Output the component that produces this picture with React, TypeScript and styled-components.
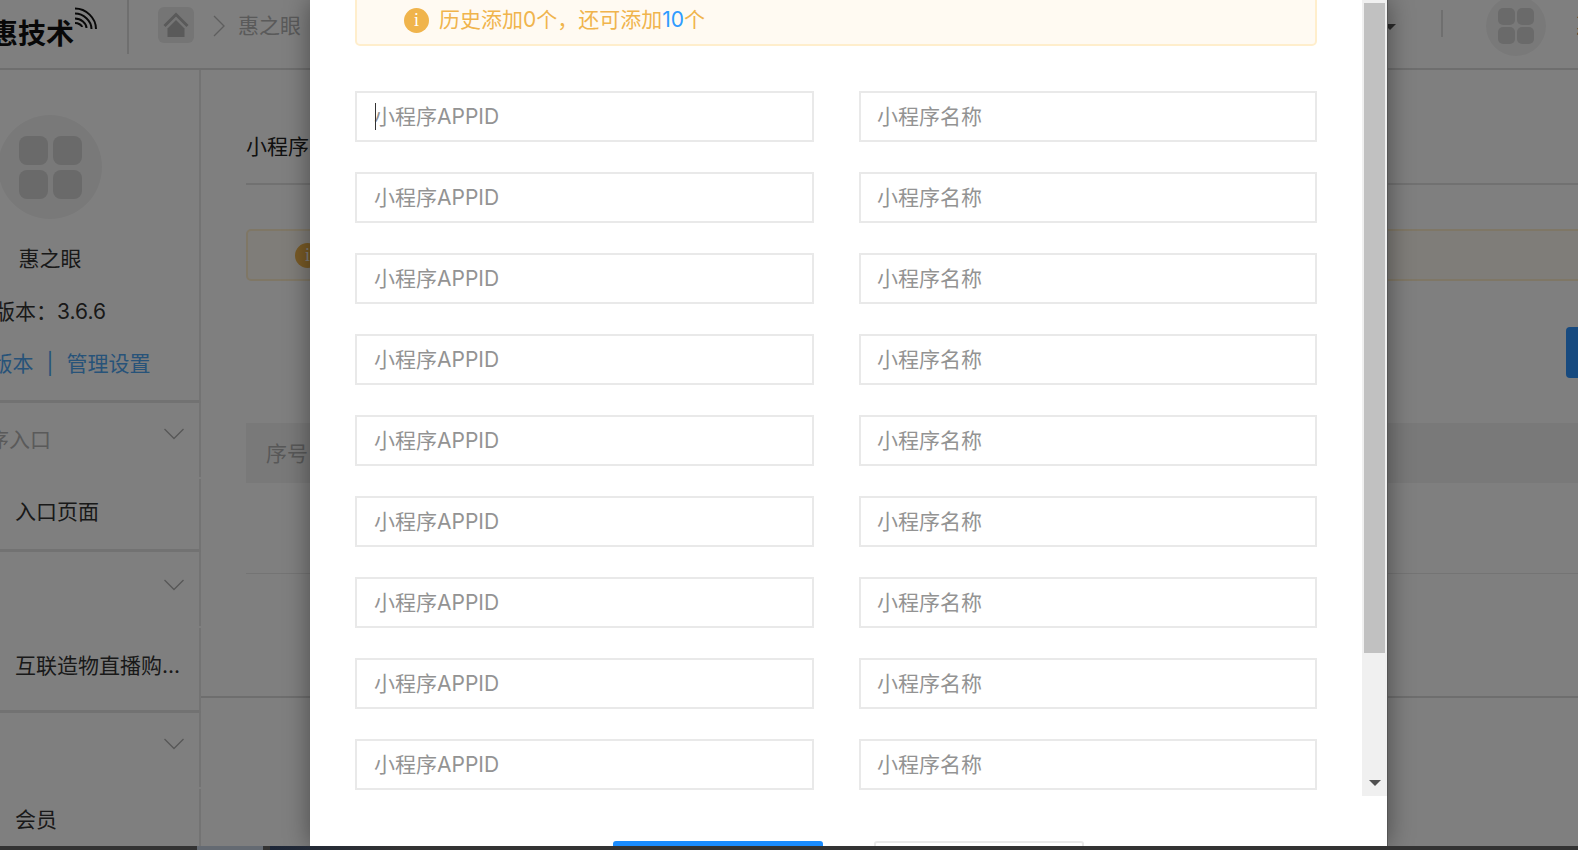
import React from "react";
import styled, { createGlobalStyle } from "styled-components";

const GlobalStyle = createGlobalStyle`
  html, body { margin: 0; padding: 0; overflow: hidden; background: #fff; }
  body { font-family: "Inter", "Noto Sans CJK SC", sans-serif; font-size: 21px; color: #444; }
  * { box-sizing: border-box; }
`;

const Screen = styled.div`
  width: 1578px;
  height: 850px;
  display: flex;
  flex-direction: column;
  overflow: hidden;
`;
const Page = styled.div`
  position: relative;
  height: 846px;
  flex: none;
  overflow: hidden;
  display: flex;
  flex-direction: column;
`;

/* ---------- header ---------- */
const Header = styled.header`
  height: 70px;
  flex: none;
  display: flex;
  align-items: flex-start;
  border-bottom: 2px solid #dcdcdc;
`;
const Logo = styled.div`
  width: 127px;
  height: 68px;
  flex: none;
  display: flex;
  align-items: flex-start;
  justify-content: flex-end;
  padding-right: 52px;
  overflow: hidden;
`;
const LogoText = styled.span`
  font-size: 28px;
  font-weight: 700;
  line-height: 34px;
  margin-top: 17px;
  color: #111;
  white-space: nowrap;
  flex: none;
`;
const LogoWaves = styled.svg`
  width: 24px;
  height: 24px;
  margin-top: 7px;
  margin-right: -23px;
  flex: none;
`;
const HeaderRule = styled.div<{ $top: number; $h: number; $left: number }>`
  width: 2px;
  height: ${(p) => p.$h}px;
  margin-top: ${(p) => p.$top}px;
  margin-left: ${(p) => p.$left}px;
  background: #dedede;
  flex: none;
`;
const HomeTile = styled.div`
  width: 36px;
  height: 36px;
  margin-top: 7px;
  margin-left: 29px;
  border-radius: 6px;
  background: #eaeaea;
  display: flex;
  align-items: center;
  justify-content: center;
  flex: none;
`;
const CrumbArrow = styled.svg`
  width: 12px;
  height: 22px;
  margin-top: 15px;
  margin-left: 19px;
  flex: none;
`;
const Crumb = styled.span`
  margin-left: 13px;
  margin-top: 10px;
  line-height: 32px;
  color: #b4b4b4;
  white-space: nowrap;
`;
const UserCaret = styled.div`
  margin-left: auto;
  margin-top: 24px;
  width: 0;
  height: 0;
  border-left: 6px solid transparent;
  border-right: 6px solid transparent;
  border-top: 6px solid #555;
  flex: none;
`;
const AvatarCircle = styled.div<{ $size: number; $top: number; $left: number }>`
  width: ${(p) => p.$size}px;
  height: ${(p) => p.$size}px;
  margin-top: ${(p) => p.$top}px;
  margin-left: ${(p) => p.$left}px;
  border-radius: 50%;
  background: #f3f3f3;
  display: flex;
  align-items: center;
  justify-content: center;
  flex: none;
`;
const TileGrid = styled.div<{ $tile: number; $gap: number }>`
  display: grid;
  grid-template-columns: ${(p) => p.$tile}px ${(p) => p.$tile}px;
  grid-auto-rows: ${(p) => p.$tile}px;
  gap: ${(p) => p.$gap}px;
`;
const Tile = styled.i<{ $radius: number }>`
  display: block;
  background: #d4d4d4;
  border-radius: ${(p) => p.$radius}px;
`;
const UserName = styled.span`
  margin-left: 30px;
  margin-right: -19px;
  margin-top: 10px;
  line-height: 32px;
  color: #444;
  white-space: nowrap;
  flex: none;
`;

/* ---------- body ---------- */
const Columns = styled.div`
  flex: 1;
  display: flex;
  min-height: 0;
`;
const Sidebar = styled.aside`
  width: 300px;
  margin-left: -99px;
  flex: none;
  display: flex;
  flex-direction: column;
`;
const Profile = styled.div`
  height: 333px;
  flex: none;
  padding-top: 45px;
  display: flex;
  flex-direction: column;
  align-items: center;
  border-right: 2px solid #e6e6e6;
  border-bottom: 3px solid #e4e4e4;
`;
const ProfileLine = styled.div<{ $top: number }>`
  margin-top: ${(p) => p.$top}px;
  line-height: 30px;
  color: #333;
  white-space: nowrap;
`;
const LinkLine = styled.div`
  margin-top: 22px;
  line-height: 30px;
  color: #4fa6f2;
  white-space: nowrap;
  display: flex;
  gap: 13px;
`;
const NavHead = styled.div<{ $h: number; $gap: number }>`
  height: ${(p) => p.$h}px;
  margin-bottom: ${(p) => p.$gap}px;
  flex: none;
  display: flex;
  align-items: center;
  justify-content: space-between;
  padding: 0 14px 0 99px;
  color: #b4b4b4;
  border-right: 2px solid #e6e6e6;
  white-space: nowrap;
`;
const NavHeadLabel = styled.span`
  margin-left: -54px;
  margin-top: -5px;
`;
const Chevron = styled.svg<{ $lift: number }>`
  width: 22px;
  height: 12px;
  margin-top: ${(p) => -p.$lift}px;
  margin-left: auto;
  flex: none;
`;
const NavItem = styled.div<{ $h: number; $top: number; $divider?: boolean }>`
  height: ${(p) => p.$h}px;
  flex: none;
  padding: ${(p) => p.$top}px 0 0 114px;
  line-height: 30px;
  color: #333;
  white-space: nowrap;
  border-right: 2px solid #e6e6e6;
  ${(p) => (p.$divider ? "border-bottom: 3px solid #e4e4e4;" : "")}
`;

const Main = styled.main`
  flex: 1;
  min-width: 0;
  display: flex;
  flex-direction: column;
  overflow: hidden;
`;
const Content = styled.section`
  height: 628px;
  flex: none;
  padding: 62px 0 0 45px;
  border-bottom: 2px solid #dcdcdc;
`;
const Title = styled.div`
  height: 53px;
  line-height: 30px;
  color: #222;
  border-bottom: 2px solid #e2e2e2;
`;
const Notice = styled.div`
  margin-top: 44px;
  margin-right: -10px;
  height: 52px;
  border: 2px solid #ffeecc;
  border-radius: 5px;
  background: #fffaf2;
  display: flex;
  align-items: center;
  padding-left: 47px;
`;
const InfoDot = styled.span`
  width: 25px;
  height: 25px;
  flex: none;
  border-radius: 50%;
  background: #f0b44c;
  color: #fff;
  font-family: "Liberation Serif", serif;
  font-size: 18px;
  line-height: 25px;
  text-align: center;
`;
const ActionRow = styled.div`
  margin-top: 46px;
  display: flex;
  justify-content: flex-end;
`;
const BlueButton = styled.div`
  width: 12px;
  height: 51px;
  background: #2e94ff;
  border-radius: 4px 0 0 4px;
`;
const TableHead = styled.div`
  margin-top: 45px;
  height: 60px;
  background: #f3f3f3;
  padding-left: 20px;
  line-height: 62px;
  color: #b0b0b0;
`;
const TableRow = styled.div`
  height: 91px;
  border-bottom: 1px solid #e8e8e8;
`;

/* ---------- modal ---------- */
const Dim = styled.div`
  position: absolute;
  inset: 0;
  background: rgba(0, 0, 0, 0.5);
`;
const Modal = styled.div`
  position: absolute;
  top: 0;
  left: 310px;
  width: 1078px;
  height: 846px;
  background: #fff;
  box-shadow: 0 0 24px rgba(0, 0, 0, 0.42);
  border-right: 1px solid #555;
  display: flex;
  flex-direction: column;
  overflow: hidden;
`;
const ModalBody = styled.div`
  height: 796px;
  flex: none;
  display: flex;
`;
const ScrollArea = styled.div`
  flex: 1;
  min-width: 0;
  padding: 0 45px;
  overflow: hidden;
`;
const HistoryAlert = styled.div`
  margin-top: -5px;
  height: 51px;
  border: 2px solid #ffeecc;
  border-radius: 5px;
  background: #fffaf2;
  display: flex;
  align-items: center;
  gap: 10px;
  padding-left: 47px;
  color: #f0b44c;
`;
const AlertText = styled.span`
  margin-top: -6px;
`;
const Count = styled.span`
  color: #2e9bff;
`;
const FieldGrid = styled.div`
  margin-top: 45px;
  display: grid;
  grid-template-columns: 459px 458px;
  column-gap: 45px;
  row-gap: 30px;
`;
const Field = styled.div`
  position: relative;
  height: 51px;
`;
const TextInput = styled.input<{ $indent: number }>`
  width: 100%;
  height: 100%;
  display: block;
  border: 2px solid #e9e9e9;
  border-radius: 0;
  outline: none;
  background: #fff;
  padding: 0 17px 0 ${(p) => p.$indent}px;
  font: inherit;
  color: #333;
  &::placeholder {
    color: #939393;
    opacity: 1;
  }
`;
const TextCaret = styled.span`
  position: absolute;
  left: 20px;
  top: 12px;
  width: 1px;
  height: 27px;
  background: #333;
`;
const ScrollTrack = styled.div`
  width: 25px;
  flex: none;
  background: #f0f0f0;
  padding: 3px 2px 10px;
  display: flex;
  flex-direction: column;
  align-items: center;
`;
const ScrollThumb = styled.div`
  width: 100%;
  height: 650px;
  background: #c1c1c1;
  flex: none;
`;
const ScrollArrow = styled.div`
  margin-top: auto;
  width: 0;
  height: 0;
  border-left: 6px solid transparent;
  border-right: 6px solid transparent;
  border-top: 6px solid #505050;
`;
const ModalFooter = styled.div`
  flex: none;
  padding: 45px 0 0 303px;
  display: flex;
  gap: 51px;
`;
const ConfirmButton = styled.div`
  width: 210px;
  height: 50px;
  background: #1a8cff;
  border-radius: 3px;
`;
const CancelButton = styled.div`
  width: 210px;
  height: 50px;
  background: #fff;
  border: 2px solid #e9e9e9;
  border-radius: 3px;
`;

/* ---------- task bar ---------- */
const Taskbar = styled.div`
  height: 4px;
  flex: none;
  display: flex;
  background: #333;
`;
const TaskSegment = styled.div<{ $w: number; $bg: string }>`
  width: ${(p) => p.$w}px;
  flex: none;
  background: ${(p) => p.$bg};
`;

const AppTiles = ({ tile, gap, radius }: { tile: number; gap: number; radius: number }) => (
  <TileGrid $tile={tile} $gap={gap}>
    {[0, 1, 2, 3].map((i) => (
      <Tile key={i} $radius={radius} />
    ))}
  </TileGrid>
);

const NavChevron = ({ lift = 12 }: { lift?: number }) => (
  <Chevron $lift={lift} viewBox="0 0 22 12" fill="none" stroke="#b0b0b0" strokeWidth="1.4">
    <polyline points="1.5,1 11,10.5 20.5,1" />
  </Chevron>
);

const rows = Array.from({ length: 9 }, (_, i) => i);

export default function App() {
  return (
    <Screen>
      <GlobalStyle />
      <Page>
        <Header>
          <Logo>
            <LogoText>惠技术</LogoText>
            <LogoWaves viewBox="0 0 24 24" fill="none" stroke="#111" strokeWidth="2">
              <path d="M1 1.5 C12 1.5 22 11 22 22" />
              <path d="M1 6.5 C9.5 6.5 17.5 14 17.5 22" />
              <path d="M1 11.5 C7 11.5 12.5 16.5 12.5 21" />
              <path d="M1 16 C4 16 8 18 8 20" />
            </LogoWaves>
          </Logo>
          <HeaderRule $top={0} $h={54} $left={0} />
          <HomeTile>
            <svg width="26" height="26" viewBox="0 0 26 26">
              <polyline points="1.5,14 13,2.5 24.5,14" fill="none" stroke="#b4b4b4" strokeWidth="3" />
              <polygon points="4.5,16.5 13,8 21.5,16.5 21.5,25 4.5,25" fill="#b4b4b4" />
            </svg>
          </HomeTile>
          <CrumbArrow viewBox="0 0 12 22" fill="none" stroke="#bdbdbd" strokeWidth="1.4">
            <polyline points="1,1 11,11 1,21" />
          </CrumbArrow>
          <Crumb>惠之眼</Crumb>
          <UserCaret />
          <HeaderRule $top={10} $h={27} $left={45} />
          <AvatarCircle $size={60} $top={-4} $left={43}>
            <AppTiles tile={17} gap={2} radius={5} />
          </AvatarCircle>
          <UserName>惠</UserName>
        </Header>
        <Columns>
          <Sidebar>
            <Profile>
              <AvatarCircle $size={104} $top={0} $left={0}>
                <AppTiles tile={29} gap={5} radius={8} />
              </AvatarCircle>
              <ProfileLine $top={25}>惠之眼</ProfileLine>
              <ProfileLine $top={23}>版本：3.6.6</ProfileLine>
              <LinkLine>
                <span>切换版本</span>
                <span>|</span>
                <span>管理设置</span>
              </LinkLine>
            </Profile>
            <NavHead $h={74} $gap={2}>
              <NavHeadLabel>小程序入口</NavHeadLabel>
              <NavChevron />
            </NavHead>
            <NavItem $h={73} $top={18} $divider>
              入口页面
            </NavItem>
            <NavHead $h={74} $gap={2}>
              <NavChevron lift={9} />
            </NavHead>
            <NavItem $h={85} $top={23} $divider>
              互联造物直播购...
            </NavItem>
            <NavHead $h={74} $gap={2}>
              <NavChevron />
            </NavHead>
            <NavItem $h={60} $top={16}>
              会员
            </NavItem>
          </Sidebar>
          <Main>
            <Content>
              <Title>小程序</Title>
              <Notice>
                <InfoDot>i</InfoDot>
              </Notice>
              <ActionRow>
                <BlueButton />
              </ActionRow>
              <TableHead>序号</TableHead>
              <TableRow />
            </Content>
          </Main>
        </Columns>
        <Dim />
        <Modal>
          <ModalBody>
            <ScrollArea>
              <HistoryAlert>
                <InfoDot>i</InfoDot>
                <AlertText>
                  历史添加0个，还可添加<Count>10</Count>个
                </AlertText>
              </HistoryAlert>
              <FieldGrid>
                {rows.map((i) => (
                  <React.Fragment key={i}>
                    <Field>
                      <TextInput $indent={17} placeholder="小程序APPID" readOnly />
                      {i === 0 && <TextCaret />}
                    </Field>
                    <Field>
                      <TextInput $indent={16} placeholder="小程序名称" readOnly />
                    </Field>
                  </React.Fragment>
                ))}
              </FieldGrid>
            </ScrollArea>
            <ScrollTrack>
              <ScrollThumb />
              <ScrollArrow />
            </ScrollTrack>
          </ModalBody>
          <ModalFooter>
            <ConfirmButton />
            <CancelButton />
          </ModalFooter>
        </Modal>
      </Page>
      <Taskbar>
        <TaskSegment $w={197} $bg="#333" />
        <TaskSegment $w={66} $bg="#646a72" />
        <TaskSegment $w={7} $bg="#333" />
        <TaskSegment $w={130} $bg="linear-gradient(90deg,#1c2638,#333)" />
      </Taskbar>
    </Screen>
  );
}
